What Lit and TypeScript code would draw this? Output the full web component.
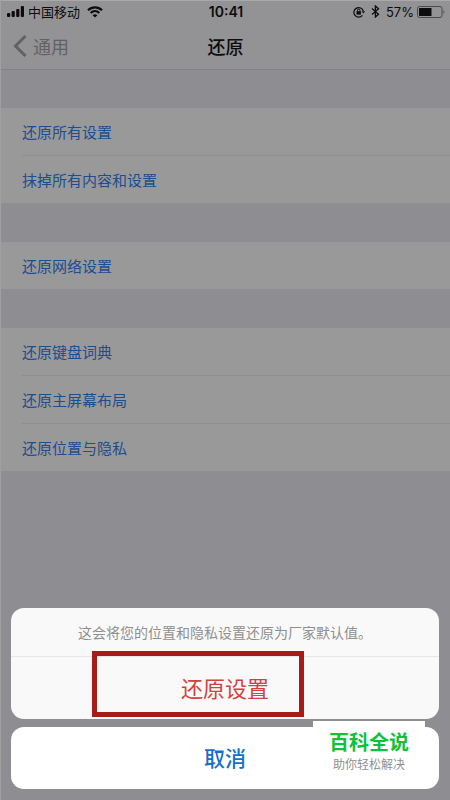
import { LitElement, html, css, svg } from "lit";
import { customElement } from "lit/decorators.js";

const groups: string[][] = [
  ["还原所有设置", "抹掉所有内容和设置"],
  ["还原网络设置"],
  ["还原键盘词典", "还原主屏幕布局", "还原位置与隐私"],
];

const signalBars = [
  { x: 0, h: 4 },
  { x: 4.6, h: 6 },
  { x: 9.2, h: 8 },
  { x: 13.8, h: 11 },
];

@customElement("status-bar")
class StatusBar extends LitElement {
  static styles = css`
    :host {
      display: grid;
      grid-template-columns: 1fr auto 1fr;
      align-items: center;
      height: 21px;
      padding: 0 5px 0 6px;
      font-size: 13px;
      line-height: 20px;
      color: #0c0c0d;
    }
    .side {
      display: flex;
      align-items: center;
      gap: 4px;
    }
    .end {
      justify-content: flex-end;
      gap: 6px;
    }
    .time {
      font-family: Inter, "Liberation Sans", sans-serif;
      font-size: 14px;
      font-weight: 600;
    }
    .percent {
      font-family: Inter, "Liberation Sans", sans-serif;
    }
    .wifi {
      margin-left: 3px;
    }
    .battery {
      margin-left: -3px;
    }
    svg {
      display: block;
      flex: none;
    }
  `;
  render() {
    return html`
      <div class="side">
        <svg width="17" height="11" viewBox="0 0 17 11" fill="currentColor">
          ${signalBars.map((b) => svg`<rect x=${b.x} y=${11 - b.h} width="3.2" height=${b.h} rx="1"></rect>`)}
        </svg>
        <span>中国移动</span>
        <svg class="wifi" width="16" height="12" viewBox="0 0 16 12" fill="none" stroke="currentColor" stroke-width="2.2">
          <path d="M1 4.3C5 .3 11 .3 15 4.3"></path>
          <path d="M3.7 7C6.2 4.6 9.8 4.6 12.3 7"></path>
          <path d="M8 11.6 5.6 9.2C7 7.9 9 7.9 10.4 9.2Z" fill="currentColor" stroke="none"></path>
        </svg>
      </div>
      <span class="time">10:41</span>
      <div class="side end">
        <svg width="12" height="12" viewBox="0 0 12 12" fill="none" stroke="currentColor" stroke-width="1.2">
          <path d="M9.4 9.4A4.8 4.8 0 1 1 10.3 5"></path>
          <path d="M8.6 5.2H12L10.4 7.6Z" fill="currentColor" stroke="none"></path>
          <rect x="3.5" y="5.2" width="4.4" height="3.4" fill="currentColor" stroke="none"></rect>
          <path d="M4.5 5.5V4.3a1.2 1.2 0 0 1 2.4 0V5.5" stroke-width="1"></path>
        </svg>
        <svg width="9" height="13" viewBox="0 0 9 13" fill="none" stroke="currentColor" stroke-width="1.3">
          <path d="M1 3.6 7.5 9.2 4.4 12V1L7.5 3.8 1 9.4"></path>
        </svg>
        <span class="percent">57%</span>
        <svg class="battery" width="28" height="12" viewBox="0 0 28 12">
          <rect x=".5" y=".5" width="24.5" height="11" rx="2" fill="none" stroke="#4a4a4c"></rect>
          <rect x="2" y="2" width="12.5" height="8" rx=".5" fill="#0c0c0d"></rect>
          <path d="M26.4 4v4c1.4-.6 1.4-3.4 0-4Z" fill="#5a5a5c"></path>
        </svg>
      </div>
    `;
  }
}

@customElement("settings-group")
class SettingsGroup extends LitElement {
  static properties = { items: { attribute: false } };
  declare items: string[];
  static styles = css`
    :host {
      display: block;
      background: #999999;
    }
    ul {
      list-style: none;
      margin: 0;
      padding: 0 0 0 21px;
    }
    li + li {
      border-top: 1px solid #8f8f91;
    }
    button {
      display: block;
      width: 100%;
      height: 47px;
      padding: 0;
      border: 0;
      background: none;
      font: inherit;
      font-size: 15px;
      text-align: left;
      color: #1b4d8f;
    }
  `;
  render() {
    return html`<ul>
      ${this.items.map((t) => html`<li><button type="button">${t}</button></li>`)}
    </ul>`;
  }
}

@customElement("app-root")
class AppRoot extends LitElement {
  static styles = css`
    :host {
      display: block;
      position: relative;
      box-sizing: border-box;
      min-height: 100vh;
      border-top: 1px solid #a9a9ab;
      border-left: 1px solid #a0a0a2;
      background: #8e8e92;
      font-family: "Noto Sans CJK SC", sans-serif;
    }
    .top {
      background: #939395;
      border-bottom: 1px solid #838386;
    }
    .nav {
      display: grid;
      grid-template-columns: 1fr auto 1fr;
      align-items: center;
      height: 47px;
      padding: 0 12px;
    }
    .back {
      display: flex;
      align-items: center;
      gap: 6px;
      justify-self: start;
      padding: 0;
      border: 0;
      background: none;
      font: inherit;
      font-size: 18px;
      color: #626264;
    }
    h1 {
      margin: 0;
      font-size: 18px;
      font-weight: 500;
      color: #0c0c0d;
    }
    .groups {
      display: flex;
      flex-direction: column;
      gap: 39px;
      padding: 38px 0;
    }
    .sheet {
      position: absolute;
      left: 10px;
      right: 11px;
      bottom: 11px;
      display: flex;
      flex-direction: column;
      gap: 8px;
    }
    .panel {
      position: relative;
      border-radius: 13px;
      background: #f9f9f9;
    }
    .message {
      margin: 0;
      padding: 12px 0;
      border-bottom: 1px solid #e6e6e7;
      font-size: 14px;
      line-height: 24px;
      text-align: center;
      color: #8f8f8f;
    }
    .action {
      display: block;
      width: 100%;
      height: 62px;
      padding: 0 0 2px;
      border: 0;
      border-radius: 13px;
      background: none;
      font: inherit;
      font-size: 22px;
      color: #d0423e;
    }
    .cancel {
      background: #ffffff;
      font-size: 21px;
      font-weight: 500;
      color: #1670c8;
    }
    .highlight {
      position: absolute;
      left: 81px;
      right: 135px;
      bottom: 2px;
      height: 56px;
      border: 5px solid #a51c18;
      pointer-events: none;
    }
    .mark {
      position: absolute;
      right: 25px;
      bottom: 24px;
      display: flex;
      flex-direction: column;
      align-items: center;
      padding: 8px 16px 4px;
      background: #ffffff;
    }
    .mark-name {
      font-size: 20px;
      line-height: 26px;
      font-weight: 700;
      color: #0fc23a;
    }
    .mark-tag {
      font-size: 12px;
      line-height: 17px;
      color: #8f8f8f;
    }
  `;
  render() {
    return html`
      <header class="top">
        <status-bar></status-bar>
        <div class="nav">
          <button class="back" type="button">
            <svg width="14" height="22" viewBox="0 0 14 22" fill="none" stroke="currentColor" stroke-width="3">
              <path d="M12.5 1 2.5 11 12.5 21"></path>
            </svg>
            <span>通用</span>
          </button>
          <h1>还原</h1>
        </div>
      </header>
      <main class="groups">
        ${groups.map((g) => html`<settings-group .items=${g}></settings-group>`)}
      </main>
      <div class="sheet" role="dialog" aria-labelledby="message">
        <section class="panel">
          <p class="message" id="message">这会将您的位置和隐私设置还原为厂家默认值。</p>
          <button class="action" type="button">还原设置</button>
          <div class="highlight"></div>
        </section>
        <button class="action cancel" type="button">取消</button>
      </div>
      <aside class="mark">
        <span class="mark-name">百科全说</span>
        <span class="mark-tag">助你轻松解决</span>
      </aside>
    `;
  }
}
